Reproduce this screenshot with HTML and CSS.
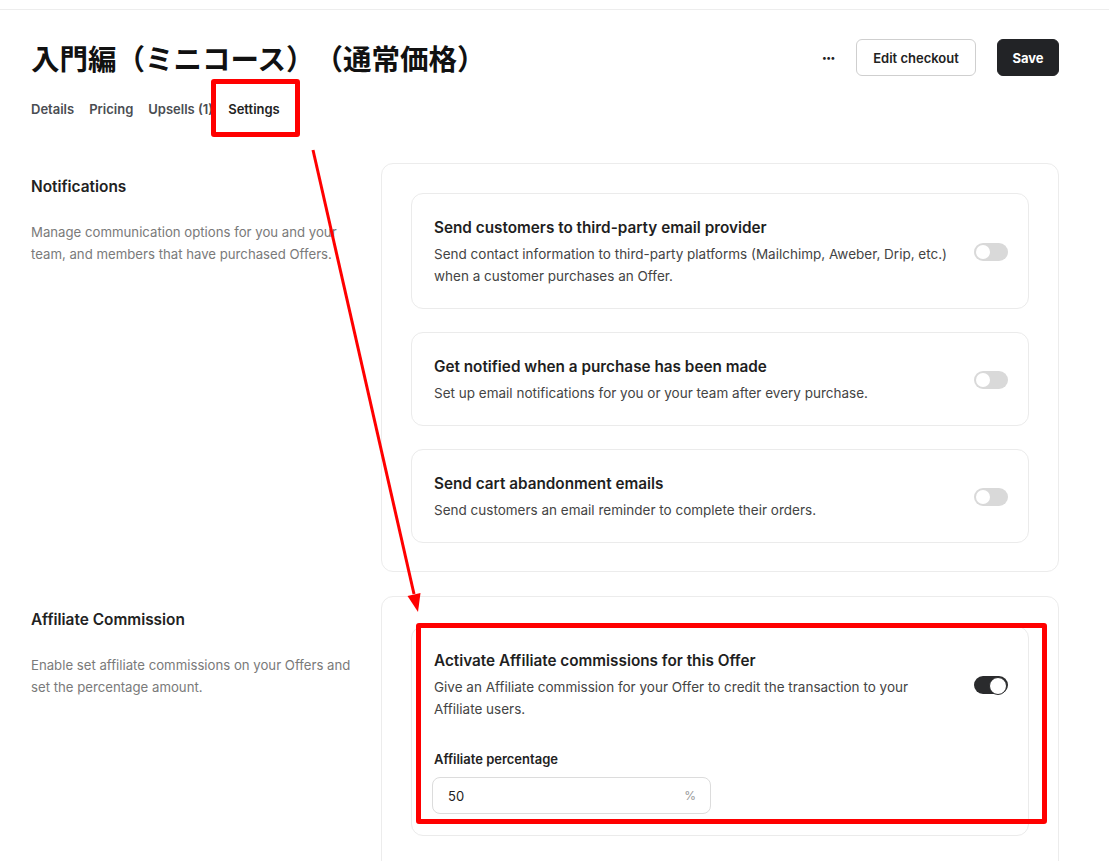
FILE: index.html
```html
<!DOCTYPE html>
<html lang="ja">
<head>
<meta charset="utf-8">
<title>Settings</title>
<link rel="stylesheet" href="styles.css">
</head>
<body>
<div class="topline"></div>
<div class="page">
  <header class="header">
    <h1 class="title">入門編（ミニコース）（通常価格）</h1>
    <div class="actions">
      <span class="more">•••</span>
      <button class="btn btn-outline">Edit checkout</button>
      <button class="btn btn-dark">Save</button>
    </div>
  </header>
  <nav class="tabs">
    <span class="tab">Details</span>
    <span class="tab">Pricing</span>
    <span class="tab">Upsells (1)</span>
    <span class="tab tab-active">Settings<span class="mark mark-tab"></span></span>
  </nav>

  <section class="section">
    <div class="side">
      <h2 class="side-title">Notifications</h2>
      <p class="side-desc">Manage communication options for you and your team, and members that have purchased Offers.</p>
    </div>
    <div class="panel">
      <div class="card">
        <div class="row">
          <div class="text">
            <div class="card-title">Send customers to third-party email provider</div>
            <div class="card-desc">Send contact information to third-party platforms (Mailchimp, Aweber, Drip, etc.) when a customer purchases an Offer.</div>
          </div>
          <span class="toggle"></span>
        </div>
      </div>
      <div class="card">
        <div class="row">
          <div class="text">
            <div class="card-title">Get notified when a purchase has been made</div>
            <div class="card-desc">Set up email notifications for you or your team after every purchase.</div>
          </div>
          <span class="toggle"></span>
        </div>
      </div>
      <div class="card">
        <div class="row">
          <div class="text">
            <div class="card-title">Send cart abandonment emails</div>
            <div class="card-desc">Send customers an email reminder to complete their orders.</div>
          </div>
          <span class="toggle"></span>
        </div>
      </div>
    </div>
  </section>

  <section class="section">
    <div class="side">
      <h2 class="side-title">Affiliate Commission</h2>
      <p class="side-desc">Enable set affiliate commissions on your Offers and set the percentage amount.</p>
    </div>
    <div class="panel panel-open">
      <div class="card">
        <div class="row">
          <div class="text">
            <div class="card-title">Activate Affiliate commissions for this Offer</div>
            <div class="card-desc">Give an Affiliate commission for your Offer to credit the transaction to your Affiliate users.</div>
          </div>
          <span class="toggle toggle-on"></span>
        </div>
        <div class="field-label">Affiliate percentage</div>
        <div class="input">
          <span class="input-value">50</span>
          <span class="input-suffix">%</span>
        </div>
      </div>
      <span class="mark mark-card"></span>
    </div>
  </section>
</div>
<svg class="arrow" width="1109" height="861" viewBox="0 0 1109 861">
  <line x1="313" y1="150" x2="414" y2="594" stroke="#f00" stroke-width="3"/>
  <polygon points="418,612 420.5,593 407.5,596" fill="#f00"/>
</svg>
</body>
</html>
```
FILE: styles.css
```css
* { box-sizing: border-box; }
html, body { margin: 0; padding: 0; background: #fff; }
body {
  font-family: "Inter", "Noto Sans", "Noto Sans CJK JP", sans-serif;
  color: #1f1f1f;
  position: relative;
  width: 1109px;
  height: 861px;
  overflow: hidden;
}
.topline { height: 10px; border-bottom: 1px solid #ededed; }
.page { padding: 0 50px 0 31px; }

.header {
  display: flex;
  align-items: center;
  justify-content: space-between;
  margin-top: 29px;
  height: 37px;
}
.title {
  margin: 0;
  font-family: "Noto Sans CJK JP", sans-serif;
  font-weight: 700;
  font-size: 28.5px;
  line-height: 37px;
  color: #111;
  text-spacing-trim: space-all;
}
.actions { display: flex; align-items: center; }
.more { font-size: 9px; color: #222; margin-right: 21px; font-weight: 700; }
.btn {
  height: 37px;
  border-radius: 6px;
  font-family: "Inter", sans-serif;
  font-weight: 600;
  font-size: 13px;
  padding: 0;
  cursor: pointer;
}
.btn-outline { width: 120px; background: #fff; border: 1px solid #cfcfcf; color: #222; }
.btn-dark { width: 62px; background: #222326; border: 1px solid #222326; color: #fff; margin-left: 21px; font-weight: 700; }

.tabs { display: flex; gap: 15px; margin-top: 24px; height: 18px; align-items: center; }
.tab { font-size: 13px; font-weight: 600; color: #4a4d52; line-height: 18px; position: relative; }
.tab-active { color: #222; }
.mark { position: absolute; border: 5px solid #f00; border-radius: 3px; pointer-events: none; }
.mark-tab { left: -17px; top: -21px; width: 89px; height: 58px; }

.section {
  display: grid;
  grid-template-columns: 320px 1fr;
  column-gap: 30px;
  margin-top: 45px;
}
.section + .section { margin-top: 24px; }
.side { padding-top: 15px; }
.side-title { margin: 0; font-size: 15.4px; font-weight: 600; color: #222; line-height: 18px; }
.side-desc { margin: 25px 0 0; font-size: 13.2px; line-height: 22px; color: #7a7a7a; }

.panel {
  border: 1px solid #ececec;
  border-radius: 12px;
  padding: 29px 29px 28px;
  display: flex;
  flex-direction: column;
  gap: 23px;
  position: relative;
}
.panel-open { padding-bottom: 60px; }
.card {
  border: 1px solid #ebebeb;
  border-radius: 12px;
  padding: 23px 20px 21px 22px;
}
.row { display: flex; align-items: center; gap: 20px; }
.text { flex: 1; }
.card-title { font-size: 15.3px; font-weight: 600; line-height: 22px; color: #1f1f1f; }
.card-desc { margin-top: 4px; font-size: 13.5px; line-height: 22px; color: #444; }

.toggle {
  width: 34px; height: 18px;
  border-radius: 9px;
  background: #d9d9d9;
  position: relative;
  flex: none;
}
.toggle::after {
  content: "";
  position: absolute;
  left: 2px; top: 2px;
  width: 14px; height: 14px;
  border-radius: 50%;
  background: #fff;
}
.toggle-on { background: #2a2b2d; }
.toggle-on::after { left: auto; right: 1px; top: 1px; width: 16px; height: 16px; border: 1.5px solid #2a2b2d; }

.field-label { margin-top: 30px; font-size: 13px; font-weight: 600; line-height: 18px; color: #222; }
.input {
  margin-top: 9px;
  width: 279px;
  height: 37px;
  border: 1px solid #dcdcdc;
  border-radius: 8px;
  display: flex;
  align-items: center;
  justify-content: space-between;
  padding: 0 14px 0 15px;
  margin-left: -2px;
}
.input-value { font-size: 13px; color: #222; }
.input-suffix { font-size: 12px; color: #999; }
.mark-card { left: 34px; top: 26px; width: 631px; height: 201px; }

.arrow { position: absolute; left: 0; top: 0; pointer-events: none; }
```
